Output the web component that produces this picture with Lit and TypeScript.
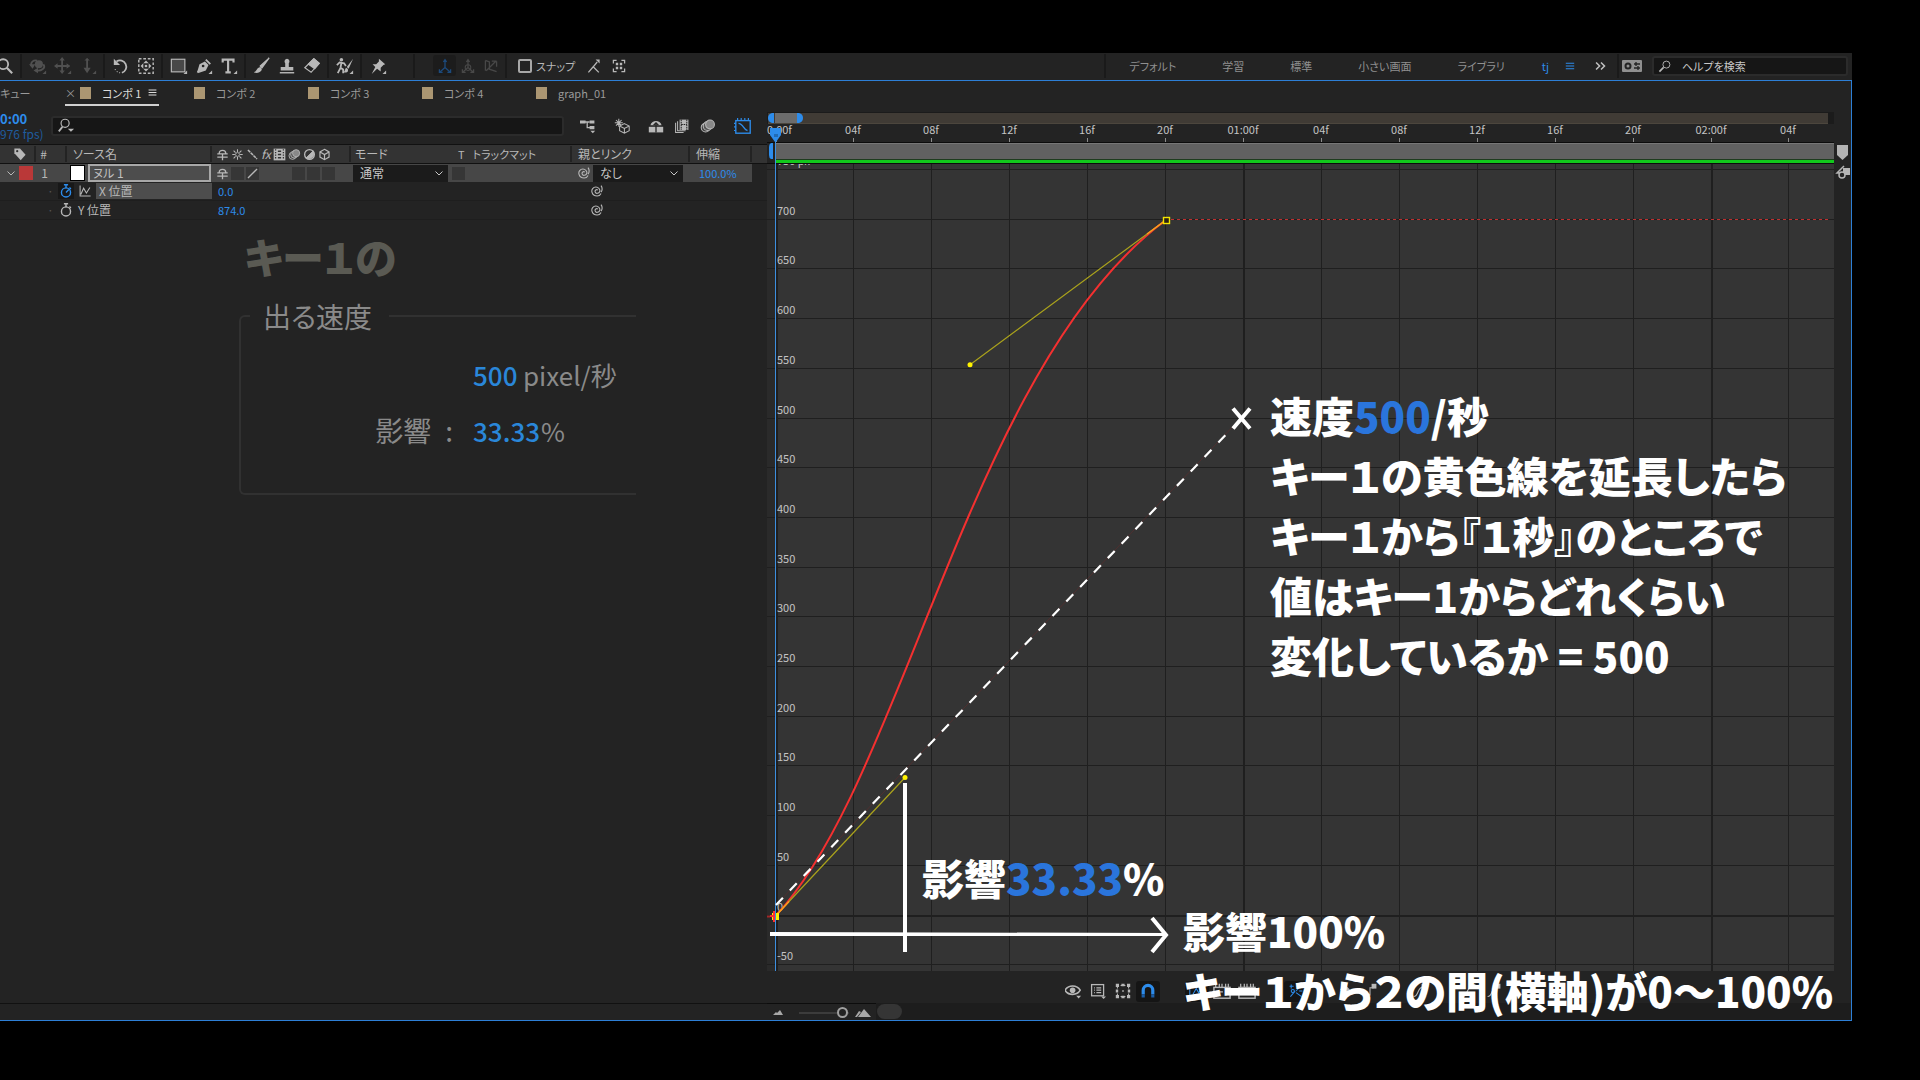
import { LitElement, html, css, svg, nothing, SVGTemplateResult } from "lit";
import { customElement, property, state } from "lit/decorators.js";
import { classMap } from "lit/directives/class-map.js";

/* ---------- icons, drawn on a 20 x 20 grid ---------- */
const corner = svg`<path d="M19 15v4h-4z" fill="currentColor" stroke="none"/>`;
const icons: Record<string, SVGTemplateResult> = {
  zoom: svg`<circle cx="8" cy="8" r="5.5" stroke-width="2"/><path d="M12 12l6 6" stroke-width="2.4"/>`,
  orbit: svg`<path d="M9 4C5 3 1 6 3 10M16 8c3 4-2 8-8 7" stroke-width="2"/><path d="M0 8l4 5 3-5zM10 12v6l-5-3z" fill="currentColor" stroke="none"/><circle cx="11" cy="8" r="4.500" fill="currentColor" stroke="none"/>${corner}`,
  move: svg`<path d="M9 2v15M2 10h15" stroke-width="2"/><path d="M9 0l3 4H6zM9 19l3-4H6zM0 10l4-3v6zM18 10l-4-3v6z" fill="currentColor" stroke="none"/>${corner}`,
  dolly: svg`<path d="M9 2v13" stroke-width="2"/><path d="M5 12h8l-4 6zM6 4h6L9 1z" fill="currentColor" stroke="none"/>${corner}`,
  rotate: svg`<path d="M5 5a7 7 0 1 1 6 12.500" stroke-width="2"/><path d="M9 17.500a7 7 0 0 1-6-5" stroke-dasharray="1 2"/><path d="M2 2v7h7z" fill="currentColor" stroke="none"/>`,
  anchor: svg`<rect x="2" y="2" width="16" height="16" stroke-dasharray="3 2" stroke-width="1.600"/><path d="M10 4l3 3H7zM10 16l3-3H7zM4 10l3-3v6zM16 10l-3-3v6z" fill="currentColor" stroke="none"/><circle cx="10" cy="10" r="1.500" fill="currentColor" stroke="none"/>`,
  rect: svg`<rect x="1.500" y="2.500" width="15" height="14" fill="#484848"/>${corner}`,
  pen: svg`<path d="M2 18L5 8l6-3 4 4-3 6-9 3 4-5" fill="currentColor" stroke="none"/><path d="M12 3l5 5M3 17l5-6" stroke-width="2"/><circle cx="9" cy="10" r="1.500" fill="#232323" stroke="none"/>${corner}`,
  type: svg`<path d="M3 6V3h12v3M9 3v14M6 17h6" stroke-width="2.400"/>${corner}`,
  brush: svg`<path d="M18 1L10 12l-2-2z" fill="currentColor"/><path d="M8 11c2 1 3 4-1 6-2 1-4 1-6 0 3-1 3-5 7-6z" fill="currentColor" stroke="none"/>`,
  stamp: svg`<path d="M10 2a3 3 0 0 1 2 5v4h5v4H3v-4h5V7a3 3 0 0 1 2-5z" fill="currentColor" stroke="none"/><path d="M2 17.500h16" stroke-width="1.600"/>`,
  eraser: svg`<path d="M12 2l6 5-9 10-7-5z"/><path d="M12 2l6 5-5 6-7-5z" fill="currentColor"/>`,
  roto: svg`<circle cx="6" cy="3" r="2" fill="currentColor" stroke="none"/><path d="M1 9l3-3 5 1 2 3M6 7l-1 5-3 6M5 12l3 2v4" stroke-width="2"/><path d="M19 2l-7 9 2 2zM11 12c-1 2-1 4-3 5 5 1 6-1 5-4z" fill="currentColor" stroke="none"/>${corner}`,
  pin: svg`<path d="M11 2l7 6-2 1-3 3v4l-4-3-6 6 4-8-3-3h4l3-3z" fill="currentColor" stroke="none"/>${corner}`,
  axisLocal: svg`<path d="M10 12V3M8 5l2-3 2 3M10 12l-7 6M10 12l7 6M3 14v4h4M17 14v4h-4" stroke-width="1.600"/>`,
  axisWorld: svg`<circle cx="10" cy="12" r="3.500"/><path d="M10 12V3M8 5l2-3 2 3M10 12l-7 6M10 12l7 6M3 14v4h4M17 14v4h-4" stroke-width="1.600"/>`,
  axisView: svg`<path d="M3 3l5 2v9l9 3M16 4L4 16M17 4v7M3 16v-5M3 3v9M17 4h-6" stroke-width="1.600"/>`,
  snapOut: svg`<path d="M3 18l6-7 7 7M9 11l5-6" stroke-width="1.600"/><path d="M12 2h5v5z" fill="currentColor" stroke="none"/>`,
  snapBox: svg`<path d="M3 7V3h4M13 3h4v4M17 13v4h-4M7 17H3v-4" stroke-width="1.600"/><path d="M6 6h3v3H6zM11 6h3v3h-3zM6 11h3v3H6zM11 11h3v3h-3z" fill="currentColor" stroke="none"/>`,
  menu: svg`<path d="M4 6h12M4 10h12M4 14h12" stroke-width="1.600"/>`,
  more: svg`<path d="M3 5l5 5-5 5M10 5l5 5-5 5" stroke-width="2.200"/>`,
  help: svg`<circle cx="12" cy="8" r="5"/><path d="M8 12l-6 6" stroke-width="2.400"/>`,
  searchMenu: svg`<circle cx="9" cy="7" r="4.500"/><path d="M6 11l-4 5" stroke-width="2"/><path d="M12 13h7l-3.500 3.500z" fill="currentColor" stroke="none"/>`,
  flow: svg`<path d="M0 3h7v4H0zM12 3h6v4h-6zM12 10h6v4h-6z" fill="currentColor" stroke="none"/><path d="M6 5h6M9 5v7h4" stroke-width="1.600"/><path d="M13 16h6l-3 3z" fill="currentColor" stroke="none"/>`,
  draft3d: svg`<path d="M6 1v10M1 6h10M2.500 2.500l7 7M9.500 2.500l-7 7"/><path d="M13 7l6 3v6l-6 3-6-3v-6zM7 10l6 3 6-3M13 13v6" fill="#232323"/>`,
  shyBig: svg`<path d="M1 11h18v7H1z" fill="currentColor" stroke="none"/><path d="M3 9c2-7 12-7 14 0z" fill="currentColor" stroke="none"/><path d="M10 18V6M7 9l3-3 3 3" stroke="#232323" stroke-width="1.600"/>`,
  frameBlend: svg`<path d="M2 6v12h10M4.500 4v12h10" /><rect x="7" y="2" width="11" height="13" fill="currentColor" stroke="none"/><path d="M9 2v13M16 2v13M9 8h7" stroke="#232323" stroke-dasharray="2 1"/>`,
  blur: svg`<circle cx="7" cy="12" r="5.500" fill="#444"/><circle cx="9.500" cy="10" r="5.500" fill="#555"/><circle cx="12.500" cy="8" r="5.500" fill="#888"/>`,
  graph: svg`<rect x="2" y="4" width="16" height="14" stroke-width="1.500"/><path d="M5 7c5 0 6 8 10 8" stroke-width="1.500"/><path d="M4 1v3M8 1v3M12 1v3M16 1v3M0 7h2M0 11h2M0 15h2"/>`,
  tag: svg`<path d="M2 2h8l8 9-7 8-9-10z" fill="currentColor" stroke="none"/><circle cx="6" cy="6" r="1.600" fill="#333" stroke="none"/>`,
  shy: svg`<path d="M5 8c0-6 10-6 10 0M2 9h16M2 14h16M10 9v10" stroke-width="2"/>`,
  sun: svg`<circle cx="10" cy="10" r="3"/><path d="M10 2v4M10 14v4M2 10h4M14 10h4M4 4l3 3M13 13l3 3M16 4l-3 3M7 13l-3 3" stroke-width="1.600"/>`,
  quality: svg`<path d="M3 3l14 14" stroke-width="2.400" stroke-dasharray="5 1"/>`,
  slash: svg`<path d="M17 3L3 17" stroke-width="2"/>`,
  film: svg`<path d="M1 1h18v18H1z" fill="currentColor" stroke="none"/><path d="M4 2v16M16 2v16" stroke="#333" stroke-width="2" stroke-dasharray="2 2"/><path d="M7.500 5h5M7.500 10h5M7.500 15h5" stroke="#333" stroke-width="2"/>`,
  adjust: svg`<circle cx="10" cy="10" r="7.500" stroke-width="2"/><path d="M15.500 4.500a8 8 0 0 1-11 11z" fill="currentColor"/>`,
  cube: svg`<path d="M10 2l7 4v8l-7 4-7-4V6zM3 6l7 4 7-4M10 10v8" stroke-width="1.800"/>`,
  swirl: svg`<path d="M12 8c-2-2-5 0-4 3s6 2 7-1-2-7-6-7-7 4-6 8 4 6 8 6c3 0 5-2 6-4M17 1c2 3 2 7 0 10" stroke-width="1.700"/>`,
  watch: svg`<circle cx="10" cy="12" r="6.500" stroke-width="2"/><path d="M7 1h6M10 2v4M15 5l2 2" stroke-width="2"/>`,
  watchOn: svg`<circle cx="10" cy="12" r="6.500" stroke-width="2"/><path d="M7 1h6M10 2v4M15 5l2 2M10 12l4-4" stroke-width="2"/>`,
  miniGraph: svg`<path d="M3 2v15h15M4 15l4-9 4 7 5-8" stroke-width="1.500"/>`,
  chevron: svg`<path d="M3 7l7 7 7-7" stroke-width="2"/>`,
  eye: svg`<path d="M0 9c4-7 15-7 19 0-4 7-15 7-19 0z" stroke-width="2"/><circle cx="9.500" cy="9" r="3.500" fill="currentColor" stroke="none"/><path d="M14 16h6l-3 3.500z" fill="currentColor" stroke="none"/>`,
  list: svg`<rect x="2" y="2" width="15" height="14" stroke-width="1.600"/><path d="M5 6h1M5 9h1M5 12h1M8 6h6M8 9h6M8 12h6" stroke-width="1.600"/><path d="M14 17h6l-3 3z" fill="currentColor" stroke="none"/>`,
  transform: svg`<rect x="3" y="3" width="14" height="14" stroke-dasharray="2 2"/><path d="M1 1h4v4H1zM15 1h4v4h-4zM1 15h4v4H1zM15 15h4v4h-4zM8 1h4v3H8zM8 16h4v3H8zM1 8h3v4H1zM16 8h3v4h-3zM9 9h2v2H9z" fill="currentColor" stroke="none"/>`,
  magnet: svg`<path d="M4 14V9a6 6 0 0 1 12 0v5" stroke-width="4"/><path d="M4 14v4M16 14v4" stroke-width="4" stroke="#1b5ea8"/>`,
  fit: svg`<rect x="1" y="5" width="18" height="12"/><path d="M5 14l4-7 3 5 4-4M3 2v3M7 2v3M11 2v3M15 2v3"/>`,
  frame: svg`<rect x="1" y="6" width="18" height="12" stroke-width="1.600"/><path d="M4 11h7M3 2v4M7 2v4M10 2v4M14 2v4M17 2v4" stroke-width="1.400"/>`,
  split: svg`<path d="M2 4h5M4 2v5M10 10l6-6M3 17l6-7M10 12l7 5M14 10h4"/><circle cx="6" cy="10" r="2"/>`,
  diamond: svg`<path d="M10 2l6 6-6 6-6-6z" fill="currentColor" stroke="none"/><path d="M7 17h6l-3 3z" fill="currentColor" stroke="none"/>`,
  hold: svg`<path d="M2 15h8V6h5"/><path d="M12 1h6v6h-6z" fill="currentColor" stroke="none"/>`,
  linear: svg`<path d="M2 17L12 6"/><path d="M10 1h6v6h-6z" fill="currentColor" stroke="none"/>`,
  ease: svg`<path d="M2 17c7 0 4-12 12-12"/><path d="M12 1h6v6h-6z" fill="currentColor" stroke="none"/>`,
  workspace: svg`<rect x="0" y="4" width="20" height="12" rx="1" fill="currentColor" stroke="none"/><circle cx="6" cy="10" r="2.500" stroke="#232323" stroke-width="2"/><path d="M12 8h6M14 6v4M12 12h6M16 10v4" stroke="#232323"/>`,
};

@customElement("ae-icon")
class AeIcon extends LitElement {
  @property() name = "";
  @property({ type: Number }) size = 16;
  static styles = css`
    :host { display: inline-flex; flex: none; }
    .glyph { display: block; fill: none; stroke: currentColor; stroke-width: 1.300; }
  `;
  render() {
    return html`<svg class="glyph" width=${this.size} height=${this.size} viewBox="0 0 20 20" aria-hidden="true">${icons[this.name] ?? nothing}</svg>`;
  }
}

/* ---------- top tool bar ---------- */
const toolGroups: { icon: string; label: string; dim?: boolean }[][] = [
  [{ icon: "zoom", label: "ズームツール" }],
  [
    { icon: "orbit", label: "周回ツール", dim: true },
    { icon: "move", label: "パンツール", dim: true },
    { icon: "dolly", label: "ドリーツール", dim: true },
  ],
  [{ icon: "rotate", label: "回転ツール" }, { icon: "anchor", label: "アンカーポイントツール" }],
  [
    { icon: "rect", label: "長方形ツール" },
    { icon: "pen", label: "ペンツール" },
    { icon: "type", label: "文字ツール" },
  ],
  [
    { icon: "brush", label: "ブラシツール" },
    { icon: "stamp", label: "コピースタンプツール" },
    { icon: "eraser", label: "消しゴムツール" },
  ],
  [{ icon: "roto", label: "ロトブラシツール" }],
  [{ icon: "pin", label: "パペットピンツール" }],
];

@customElement("ae-toolbar")
class AeToolbar extends LitElement {
  static styles = css`
    :host { display: flex; align-items: center; height: 27px; padding-bottom: 2px; box-sizing: border-box; background: #232323; color: #b8b8b8; overflow: hidden; font-size: 11px; }
    button { display: flex; align-items: center; justify-content: center; width: 25px; height: 25px; padding: 0; border: 0; background: none; color: inherit; font: inherit; }
    .tools { display: flex; align-items: center; margin-left: -8px; }
    .group { display: flex; }
    .sep { flex: none; width: 2px; height: 24px; margin: 0 3px; background: #1a1a1a; }
    .dim { color: #505050; }
    .axes { display: flex; align-items: center; margin-left: 15px; color: #484848; }
    .axes button { width: 23px; }
    .axes .on { color: #1c4a7c; background: #1c1c1c; border-radius: 3px; height: 21px; }
    .wide { margin-left: 23px; }
    .snap { display: flex; align-items: center; gap: 4px; margin-left: 8px; white-space: nowrap; }
    .snap input { appearance: none; width: 14px; height: 14px; margin: 0; border: 2px solid #a8a8a8; border-radius: 2px; }
    .after { display: flex; margin-left: 6px; }
    .spaces { display: flex; align-items: center; margin-left: auto; height: 100%; }
    .spaces button { width: auto; color: #909090; }
    .names { display: flex; align-items: center; gap: 46px; padding: 0 37px 0 20px; white-space: nowrap; }
    .spaces .blue { color: #2d8ceb; }
    .quick { display: flex; align-items: center; gap: 14px; padding-right: 6px; }
    .quick .more { padding: 0 0 0 3px; color: #c0c0c0; }
    .search { display: flex; align-items: center; gap: 10px; width: 196px; height: 20px; margin: 0 4px 0 10px; padding: 0 4px; box-sizing: border-box; border: 2px solid #2b2b2b; border-radius: 3px; background: #161616; }
    .search input { min-width: 0; flex: 1; padding: 0; border: 0; background: none; color: #c8c8c8; font: inherit; outline: none; }
    .search input::placeholder { color: #c8c8c8; opacity: 1; }
  `;
  render() {
    return html`
      <div class="tools">
        ${toolGroups.map(
          (g) => html`<div class="group">
              ${g.map((t) => html`<button class=${classMap({ dim: !!t.dim })} aria-label=${t.label}><ae-icon name=${t.icon} size="18"></ae-icon></button>`)}
            </div>
            ${g[0].icon === "pin" ? nothing : html`<div class="sep"></div>`}`
        )}
      </div>
      <div class="sep wide"></div>
      <div class="axes">
        <button class="on" aria-label="ローカル軸"><ae-icon name="axisLocal"></ae-icon></button>
        <button aria-label="ワールド軸"><ae-icon name="axisWorld"></ae-icon></button>
        <button aria-label="ビュー軸"><ae-icon name="axisView"></ae-icon></button>
      </div>
      <div class="sep"></div>
      <label class="snap"><input type="checkbox" /><span>スナップ</span></label>
      <div class="after">
        <button aria-label="スナップ延長"><ae-icon name="snapOut"></ae-icon></button>
        <button aria-label="スナップ境界"><ae-icon name="snapBox"></ae-icon></button>
      </div>
      <div class="spaces">
        <div class="sep"></div>
        <div class="names">
          ${["デフォルト", "学習", "標準", "小さい画面", "ライブラリ"].map((n) => html`<button>${n}</button>`)}
        </div>
        <div class="quick">
          <button class="blue">tj</button>
          <button class="blue" aria-label="メニュー"><ae-icon name="menu" size="14"></ae-icon></button>
          <button class="more" aria-label="その他"><ae-icon name="more" size="14"></ae-icon></button>
        </div>
        <div class="sep"></div>
        <button aria-label="ワークスペース"><ae-icon name="workspace" size="20"></ae-icon></button>
        <label class="search"><ae-icon name="help" size="14"></ae-icon><input type="text" placeholder="ヘルプを検索" aria-label="ヘルプを検索" /></label>
      </div>
    `;
  }
}

/* ---------- composition tabs ---------- */
@customElement("ae-tabs")
class AeTabs extends LitElement {
  @state() private active = 0;
  static styles = css`
    :host { display: flex; height: 28px; color: #9a9a9a; font-size: 11px; }
    button { display: flex; align-items: center; gap: 11px; height: 25px; padding: 0; border: 0; border-bottom: 2px solid transparent; background: none; color: inherit; font: inherit; white-space: nowrap; box-sizing: border-box; }
    .queue { width: 65px; }
    .tab { width: 114px; padding-left: 15px; }
    .tab.on { width: 94px; padding-left: 0; margin-right: 20px; gap: 0; border-color: #d0d0d0; color: #dcdcdc; }
    .chip { flex: none; width: 11px; height: 12px; background: #ab9672; }
    .on .chip { margin: 0 11px 0 9px; }
    .on .close { width: 6px; color: #9a9a9a; }
    .on .burger { margin-left: auto; }
  `;
  render() {
    return html`
      <button class="queue">キュー</button>
      ${["コンポ 1", "コンポ 2", "コンポ 3", "コンポ 4", "graph_01"].map(
        (t, i) => html`<button class=${classMap({ tab: true, on: i === this.active })} @click=${() => (this.active = i)}>
          ${i === this.active ? html`<span class="close">×</span>` : nothing}<span class="chip"></span><span>${t}</span>
          ${i === this.active ? html`<ae-icon class="burger" name="menu" size="13"></ae-icon>` : nothing}
        </button>`
      )}
    `;
  }
}

/* ---------- layer list ---------- */
@customElement("ae-layers")
class AeLayers extends LitElement {
  static styles = css`
    :host { display: flex; flex-direction: column; min-width: 0; background: #232323; color: #b8b8b8; font-size: 12px; }
    button { padding: 0; border: 0; background: none; color: inherit; font: inherit; display: inline-flex; }
    .head { display: flex; align-items: center; height: 35px; padding-bottom: 2px; box-sizing: border-box; }
    .time { width: 51px; font-size: 12px; line-height: 15px; color: #1f5c9e; white-space: nowrap; }
    .code { color: #2d8ceb; font-weight: 700; font-size: 13px; }
    .find { display: flex; align-items: center; width: 513px; height: 20px; margin-right: 16px; padding: 0 4px; box-sizing: border-box; border: 2px solid #2b2b2b; border-radius: 3px; background: #161616; }
    .find input { flex: 1; min-width: 0; border: 0; background: none; color: #ccc; font: inherit; outline: none; }
    .switches { display: flex; align-items: center; gap: 10px; }
    .switches .far { margin-left: 8px; }
    .graph { color: #2d8ceb; margin-left: 8px; }
    table { width: 767px; table-layout: fixed; border-collapse: collapse; border-top: 1px solid #111; }
    th, td { height: 18px; padding: 0; font-weight: 400; text-align: left; white-space: nowrap; line-height: 16px; }
    thead tr { background: #333; }
    th { border-bottom: 1px solid #111; }
    .cell { display: flex; align-items: center; height: 18px; gap: 3px; }
    th .cell { border-right: 2px solid #232323; height: 16px; }
    th:last-child .cell { border: 0; }
    .layer td { background: #474747; }
    .layer td:last-child, .prop td:last-child { background: #232323; }
    .prop td { border-bottom: 1px solid #1e1e1e; }
    .icons { padding-left: 4px; gap: 2px; }
    .tagcell { justify-content: center; padding-left: 6px; }
    .num { justify-content: center; padding-right: 14px; }
    .src { padding-left: 6px; }
    .mix { padding-left: 4px; }
    .swatch { width: 14px; height: 14px; background: #ba3838; }
    .lead { padding-left: 6px; }
    .null { flex: none; width: 13px; height: 14px; border: 1px solid #000; background: #fff; margin-left: 3px; }
    .name { flex: 1; height: 14px; line-height: 14px; border: 2px solid #a8a8a8; background: #4d4d4d; color: #c0c0c0; padding: 0 3px; font: inherit; min-width: 0; outline: none; margin-right: 1px; box-sizing: content-box; }
    .slot { flex: none; width: 13px; height: 13px; background: #363636; }
    .gap { width: 29px; }
    .pick { position: relative; display: flex; align-items: center; height: 17px; background: #1b1b1b; color: #c8c8c8; }
    .pick select { appearance: none; width: 100%; height: 17px; padding: 0 7px; border: 0; background: none; color: inherit; font: inherit; line-height: 16px; }
    .pick ae-icon { position: absolute; right: 4px; pointer-events: none; }
    .mode { width: 95px; margin-left: 2px; }
    .parent { width: 90px; }
    .track { gap: 8px; font-size: 11px; }
    .link { padding-left: 5px; }
    .whip { padding-left: 18px; }
    .val { color: #2d8ceb; padding-left: 6px; font-size: 11px; }
    .pct { color: #2d8ceb; font-size: 11px; padding-left: 9px; }
    .prow { padding-left: 47px; gap: 4px; }
    .dot { width: 7px; color: #555; }
    .watch { padding: 1px; color: #b8b8b8; }
    .watch.on { color: #2d8ceb; background: #181818; }
    .label { padding-left: 3px; }
    .picked { flex: 1; background: #4d4d4d; }
    .note { margin: 8px 0 0 239px; width: 397px; color: #8a8a8a; }
    .note h2 { margin: 0 0 16px 5px; font-size: 42px; line-height: 56px; font-weight: 900; color: #5a5a53; }
    fieldset { min-width: 0; height: 195px; margin: 0; padding: 14px 0 0; box-sizing: border-box; border: 2px solid #313131; border-right: 0; border-radius: 6px 0 0 6px; }
    legend { margin-left: 9px; padding: 0 17px 0 13px; font-size: 28px; line-height: 32px; }
    .line { display: grid; grid-template-columns: 232px auto auto; justify-content: start; align-items: center; height: 56px; font-size: 26px; }
    .line label { display: flex; gap: 14px; justify-self: end; padding-right: 20px; font-size: 28px; }
    .line input { width: 50px; padding: 0; border: 0; background: none; color: #2a87d9; font: inherit; font-weight: 500; outline: none; }
    .line .long { width: 68px; }
    .fill { flex: 1; }
    .foot { height: 17px; box-sizing: border-box; border-top: 1px solid #111; background: #232323; }
  `;
  private prop(label: string, value: string, on: boolean) {
    return html`<tr class="prop">
      <td colspan="3"><div class="cell prow">
        <span class="dot">·</span>
        <button class=${classMap({ watch: true, on })} aria-label="ストップウォッチ"><ae-icon name=${on ? "watchOn" : "watch"} size="14"></ae-icon></button>
        ${on ? html`<ae-icon name="miniGraph" size="14"></ae-icon><span class="label picked">${label}</span>` : html`<span>${label}</span>`}
      </div></td>
      <td><button class="val">${value}</button></td>
      <td></td><td></td>
      <td><div class="cell whip"><ae-icon name="swirl" size="13"></ae-icon></div></td>
      <td></td><td></td>
    </tr>`;
  }
  render() {
    const heads = ["shy", "sun", "quality", "fx", "film", "blur", "adjust", "cube"];
    return html`
      <div class="head">
        <div class="time"><div class="code">0:00</div><div>976 fps)</div></div>
        <label class="find"><ae-icon name="searchMenu" size="18"></ae-icon><input type="text" aria-label="レイヤーを検索" /></label>
        <div class="switches">
          <button aria-label="フローチャート"><ae-icon name="flow"></ae-icon></button>
          <button class="far" aria-label="ドラフト 3D"><ae-icon name="draft3d"></ae-icon></button>
          <button class="far" aria-label="シャイ"><ae-icon name="shyBig"></ae-icon></button>
          <button aria-label="フレームブレンド"><ae-icon name="frameBlend"></ae-icon></button>
          <button aria-label="モーションブラー"><ae-icon name="blur"></ae-icon></button>
          <button class="graph" aria-label="グラフエディター"><ae-icon name="graph" size="18"></ae-icon></button>
        </div>
      </div>
      <table>
        <colgroup>
          <col style="width:36px" /><col style="width:31px" /><col style="width:145px" /><col style="width:139px" />
          <col style="width:101px" /><col style="width:120px" /><col style="width:118px" /><col style="width:62px" /><col />
        </colgroup>
        <thead><tr>
          <th><div class="cell tagcell"><ae-icon name="tag" size="14"></ae-icon></div></th>
          <th><div class="cell num">#</div></th>
          <th><div class="cell src">ソース名</div></th>
          <th><div class="cell icons">${heads.map((h) => (h === "fx" ? html`<i>fx</i>` : html`<ae-icon name=${h} size="13"></ae-icon>`))}</div></th>
          <th><div class="mix">モード</div></th>
          <th><div class="cell track"><span class="src">T</span><span>トラックマット</span></div></th>
          <th><div class="cell src">親とリンク</div></th>
          <th><div class="cell src">伸縮</div></th>
          <th></th>
        </tr></thead>
        <tbody>
          <tr class="layer">
            <td><div class="cell lead"><ae-icon name="chevron" size="10"></ae-icon><span class="swatch"></span></div></td>
            <td><div class="cell num">1</div></td>
            <td><div class="cell"><span class="null"></span><input class="name" type="text" value="ヌル 1" aria-label="レイヤー名" /></div></td>
            <td><div class="cell icons">
              <ae-icon name="shy" size="13"></ae-icon><span class="slot"></span><span class="slot"><ae-icon name="slash" size="13"></ae-icon></span>
              <span class="gap"></span><span class="slot"></span><span class="slot"></span><span class="slot"></span>
            </div></td>
            <td><div class="pick mode"><select aria-label="モード"><option>通常</option></select><ae-icon name="chevron" size="10"></ae-icon></div></td>
            <td><span class="cell"><span class="slot"></span></span></td>
            <td><div class="cell link"><ae-icon name="swirl" size="13"></ae-icon>
              <div class="pick parent"><select aria-label="親とリンク"><option>なし</option></select><ae-icon name="chevron" size="10"></ae-icon></div></div></td>
            <td><button class="pct">100.0%</button></td>
            <td></td>
          </tr>
          ${this.prop("X 位置", "0.0", true)} ${this.prop("Y 位置", "874.0", false)}
        </tbody>
      </table>
      <div class="note">
        <h2>キー１の</h2>
        <fieldset>
          <legend>出る速度</legend>
          <div class="line"><span></span><input type="text" value="500" aria-label="速度" /><span>pixel/秒</span></div>
          <div class="line"><label for="influence"><span>影響</span><span>:</span></label><input class="long" id="influence" type="text" value="33.33" /><span>%</span></div>
        </fieldset>
      </div>
      <div class="fill"></div>
      <div class="foot"></div>
    `;
  }
}

/* ---------- graph editor ---------- */
const STEP = 77.92;
const UNIT = 49.7;
const ticks = ["0:00f", "04f", "08f", "12f", "16f", "20f", "01:00f", "04f", "08f", "12f", "16f", "20f", "02:00f", "04f"];
const tickX = (i: number) => Math.round(8.5 + i * STEP);

@customElement("ae-graph")
class AeGraph extends LitElement {
  static styles = css`
    :host { display: grid; grid-template-columns: minmax(0, 1fr) 17px; grid-template-rows: 55px minmax(0, 1fr) 32px 17px; min-width: 0; background: #232323; color: #b8b8b8; font-size: 11px; }
    button { display: flex; align-items: center; justify-content: center; padding: 0; border: 0; background: none; color: inherit; font: inherit; }
    svg { display: block; width: 100%; height: 100%; overflow: hidden; }
    text { fill: #c4c4c4; font-size: 11px; }
    .ruler { overflow: hidden; }
    .stage { position: relative; min-height: 0; }
    .stage svg { position: absolute; inset: 0; }
    .side { display: flex; flex-direction: column; align-items: center; padding-top: 36px; }
    .side svg { width: 15px; height: 16px; }
    .lower { padding: 0; }
    .notes { position: absolute; z-index: 2; margin: 0; color: #fff; font-size: 42px; line-height: 60px; font-weight: 900; white-space: nowrap; }
    .notes p { margin: 0; }
    .notes b { color: #2a75dc; font-weight: inherit; }
    .speed { left: 503px; top: 221px; }
    .part { left: 155px; top: 683px; }
    .full { left: 416px; top: 736px; }
    .bar { grid-column: 1 / -1; display: flex; align-items: center; gap: 1px; padding: 8px 0 0 294px; }
    .bar button { width: 24px; height: 21px; border-radius: 3px; }
    .bar .on { background: #151515; color: #2d8ceb; }
    .bar .wide { margin-left: 24px; }
    .zoomer { grid-column: 1 / -1; display: flex; align-items: center; background: #1d1d1d; }
    .zoomer label { display: flex; align-items: center; gap: 6px; width: 109px; padding: 1px 0 0 6px; box-sizing: border-box; border-top: 1px solid #0c0c0c; height: 17px; background: #232323; }
    .zoomer svg { width: 16px; height: 10px; flex: none; }
    .zoomer svg.small { width: 10px; }
    .zoomer input { appearance: none; width: 50px; height: 12px; margin: 0 0 0 10px; background: linear-gradient(#3c3c3c, #3c3c3c) center / 100% 2px no-repeat; }
    .zoomer input::-webkit-slider-thumb { appearance: none; width: 11px; height: 11px; border: 2px solid #a0a0a0; border-radius: 50%; background: #232323; box-sizing: border-box; }
    .thumb { width: 25px; height: 15px; margin-left: 1px; border-radius: 8px; background: #353535; }
  `;

  private ruler() {
    return html`<svg viewBox="0 0 1067 55" preserveAspectRatio="xMinYMin slice">
      <rect x="0" y="3" width="1067" height="31" fill="#1b1b1b" />
      <rect x="0" y="15" width="1067" height="18" fill="#232323" />
      <rect x="1" y="4" width="1060" height="10" fill="#403b35" />
      <rect x="1" y="14" width="1060" height="1" fill="#4c463d" />
      <rect x="8" y="4" width="22" height="10" fill="#6c6c6c" />
      <path d="M7 4v10H5q-4-1-4-5t4-5z" fill="#2d8ceb" />
      <path d="M30 4v10h2q4-1 4-5t-4-5z" fill="#2d8ceb" />
      ${ticks.map((t, i) => svg`<rect x=${tickX(i)} y="29" width="1" height="5" fill="#8c8c8c"/><text x=${i ? tickX(i) : 0} y="25" text-anchor=${i ? "middle" : "start"}>${t}</text>`)}
      <rect x="0" y="33" width="1067" height="1" fill="#0c0c0c" />
      <rect x="8" y="34" width="1059" height="16" fill="#616161" />
      <rect x="8" y="34" width="1059" height="1" fill="#777" />
      <path d="M6 34v16H4q-2-1-2-4v-8q0-3 2-4z" fill="#2d8ceb" />
      <rect x="8" y="50" width="1059" height="1" fill="#1e3c1e" />
      <rect x="8" y="51" width="1059" height="3" fill="#12c81c" />
      <rect x="0" y="54" width="1067" height="1" fill="#0c0c0c" />
      <path d="M3 19h11v7l-5 7h-1l-5-7z" fill="#2d8ceb" />
      <path d="M8 25v3M10 25v3" stroke="#164a80" />
      <rect x="8" y="33" width="1" height="22" fill="#3d8fdf" />
    </svg>`;
  }

  private plot() {
    const values = Array.from({ length: 17 }, (_, i) => 750 - i * 50);
    const y = (v: number) => Math.round(751.500 - (v / 50) * UNIT);
    return html`<svg viewBox="0 0 1067 807" preserveAspectRatio="xMinYMin slice">
      <rect width="1067" height="807" fill="#343434" />
      <rect width="8" height="807" fill="#2a2a2a" />
      ${values.map((v) => svg`<rect x="0" y=${y(v) - 1} width="1067" height=${v === 0 ? 2 : 1} fill="#1f1f1f"/>`)}
      ${ticks.map((_, i) => svg`<rect x=${tickX(i)} y="0" width=${i % 6 ? 1 : 2} height="807" fill="#1f1f1f"/>`)}
      ${values.map((v) => svg`<text x="10" y=${y(v) - 5}>${v === 750 ? "750 px" : v}</text>`)}
      <path d="M404 55.500H1064" stroke="#c03030" stroke-dasharray="3 3" />
      <path d="M0 752.500H6" stroke="#a02828" stroke-width="2" stroke-dasharray="3 1" />
      <path d="M9 741L474 254" stroke="#6a2c2c" stroke-opacity=".5" />
      <path d="M8.500 752C138 613.500 203 200.700 399 56" fill="none" stroke="#f43030" stroke-width="2" />
      <path d="M8.500 752L138 613.500M203 200.700L399 56" stroke="#aaa21c" stroke-width="1.200" />
      <path d="M8.500 752L22 737.500M380 70L399 56" stroke="#ff9a1e" stroke-width="1.500" />
      <circle cx="138" cy="613.500" r="2.500" fill="#fff200" />
      <circle cx="203" cy="200.700" r="2.500" fill="#fff200" />
      <rect x="396.500" y="53.500" width="6" height="6" fill="#2a2014" stroke="#f2e400" stroke-width="1.400" />
      <rect x="5" y="749" width="7" height="7" fill="#fff200" />
      <path d="M3 752h5M7 747v11" stroke="#ff3030" stroke-width="2" />
      <rect x="8" y="0" width="1" height="807" fill="#3d8fdf" />
      <path d="M9 741L460 269.500" stroke="#fff" stroke-width="2.200" stroke-dasharray="10 10" />
      <path d="M466 244.500l17 20M483 244.500l-17 20" stroke="#fff" stroke-width="4" />
      <path d="M138 619V788" stroke="#fff" stroke-width="4" />
      <path d="M3 768L399 769V772L3 772z" fill="#fff" />
      <path d="M385 754L399 771L385 788" fill="none" stroke="#fff" stroke-width="4" />
    </svg>`;
  }

  render() {
    return html`
      <div class="ruler">${this.ruler()}</div>
      <div class="side">
        <svg viewBox="0 0 15 16" aria-hidden="true"><path d="M2 0h11v10l-5.500 5L2 10z" fill="#b4b4b4" /></svg>
      </div>
      <div class="stage">
        ${this.plot()}
        <div class="notes speed">
          <p>速度<b>500</b>/秒</p>
          <p>キー１の黄色線を延長したら</p>
          <p>キー１から『１秒』のところで</p>
          <p>値はキー1からどれくらい</p>
          <p>変化しているか = 500</p>
        </div>
        <div class="notes part">影響<b>33.33</b>%</div>
        <div class="notes full">
          <p>影響100%</p>
          <p>キー１から２の間(横軸)が0〜100%</p>
        </div>
      </div>
      <div class="side lower">
        <svg viewBox="0 0 15 16" aria-hidden="true"><path d="M9 2L2 9l7 0" fill="none" stroke="#b4b4b4" stroke-width="1.500" /><path d="M8 4h7v7H8z" fill="#b4b4b4" /><circle cx="7" cy="11" r="3" fill="#232323" stroke="#b4b4b4" stroke-width="1.500" /></svg>
      </div>
      <div class="bar">
        <button aria-label="表示するプロパティ"><ae-icon name="eye"></ae-icon></button>
        <button aria-label="グラフの種類"><ae-icon name="list"></ae-icon></button>
        <button aria-label="変形ボックス"><ae-icon name="transform"></ae-icon></button>
        <button class="on" aria-label="スナップ"><ae-icon name="magnet" size="16"></ae-icon></button>
        <button class="on wide" aria-label="自動ズーム"><ae-icon name="fit"></ae-icon></button>
        <button aria-label="選択範囲に合わせる"><ae-icon name="frame" size="18"></ae-icon></button>
        <button aria-label="全体表示"><ae-icon name="frame" size="18"></ae-icon></button>
        <button class="on wide" aria-label="次元に分割"><ae-icon name="split"></ae-icon></button>
        <button class="wide" aria-label="キーフレーム編集"><ae-icon name="diamond"></ae-icon></button>
        <button aria-label="停止"><ae-icon name="hold"></ae-icon></button>
        <button aria-label="リニア"><ae-icon name="linear"></ae-icon></button>
        <button aria-label="自動ベジェ"><ae-icon name="ease"></ae-icon></button>
        <button class="wide" aria-label="イージーイーズ"><ae-icon name="ease"></ae-icon></button>
        <button aria-label="イージーイーズイン"><ae-icon name="ease"></ae-icon></button>
      </div>
      <div class="zoomer">
        <label>
          <svg class="small" viewBox="0 0 10 10" aria-hidden="true"><path d="M0 7l3-3 1 1 3-3 3 5z" fill="#a8a8a8" /></svg>
          <input type="range" min="0" max="100" value="98" aria-label="時間ズーム" />
          <svg viewBox="0 0 16 10" aria-hidden="true"><path d="M0 9l4-6 2 1-4 5zM3 9l6-8 7 8z" fill="#a8a8a8" /></svg>
        </label>
        <div class="thumb"></div>
      </div>
    `;
  }
}

@customElement("app-root")
class AppRoot extends LitElement {
  static styles = css`
    :host { display: flex; flex-direction: column; height: 100vh; box-sizing: border-box; padding: 53px 68px 59px 0; background: #000; overflow: hidden;
      font-family: "Noto Sans CJK JP", "Noto Sans", sans-serif; font-feature-settings: "palt"; }
    .panel { flex: 1; min-height: 0; display: flex; flex-direction: column; border: 1px solid #2d7fd6; border-left: 0; background: #232323; }
    .body { flex: 1; min-height: 0; display: grid; grid-template-columns: 767px minmax(0, 1fr); }
  `;
  render() {
    return html`
      <ae-toolbar></ae-toolbar>
      <div class="panel">
        <ae-tabs></ae-tabs>
        <div class="body"><ae-layers></ae-layers><ae-graph></ae-graph></div>
      </div>
    `;
  }
}
